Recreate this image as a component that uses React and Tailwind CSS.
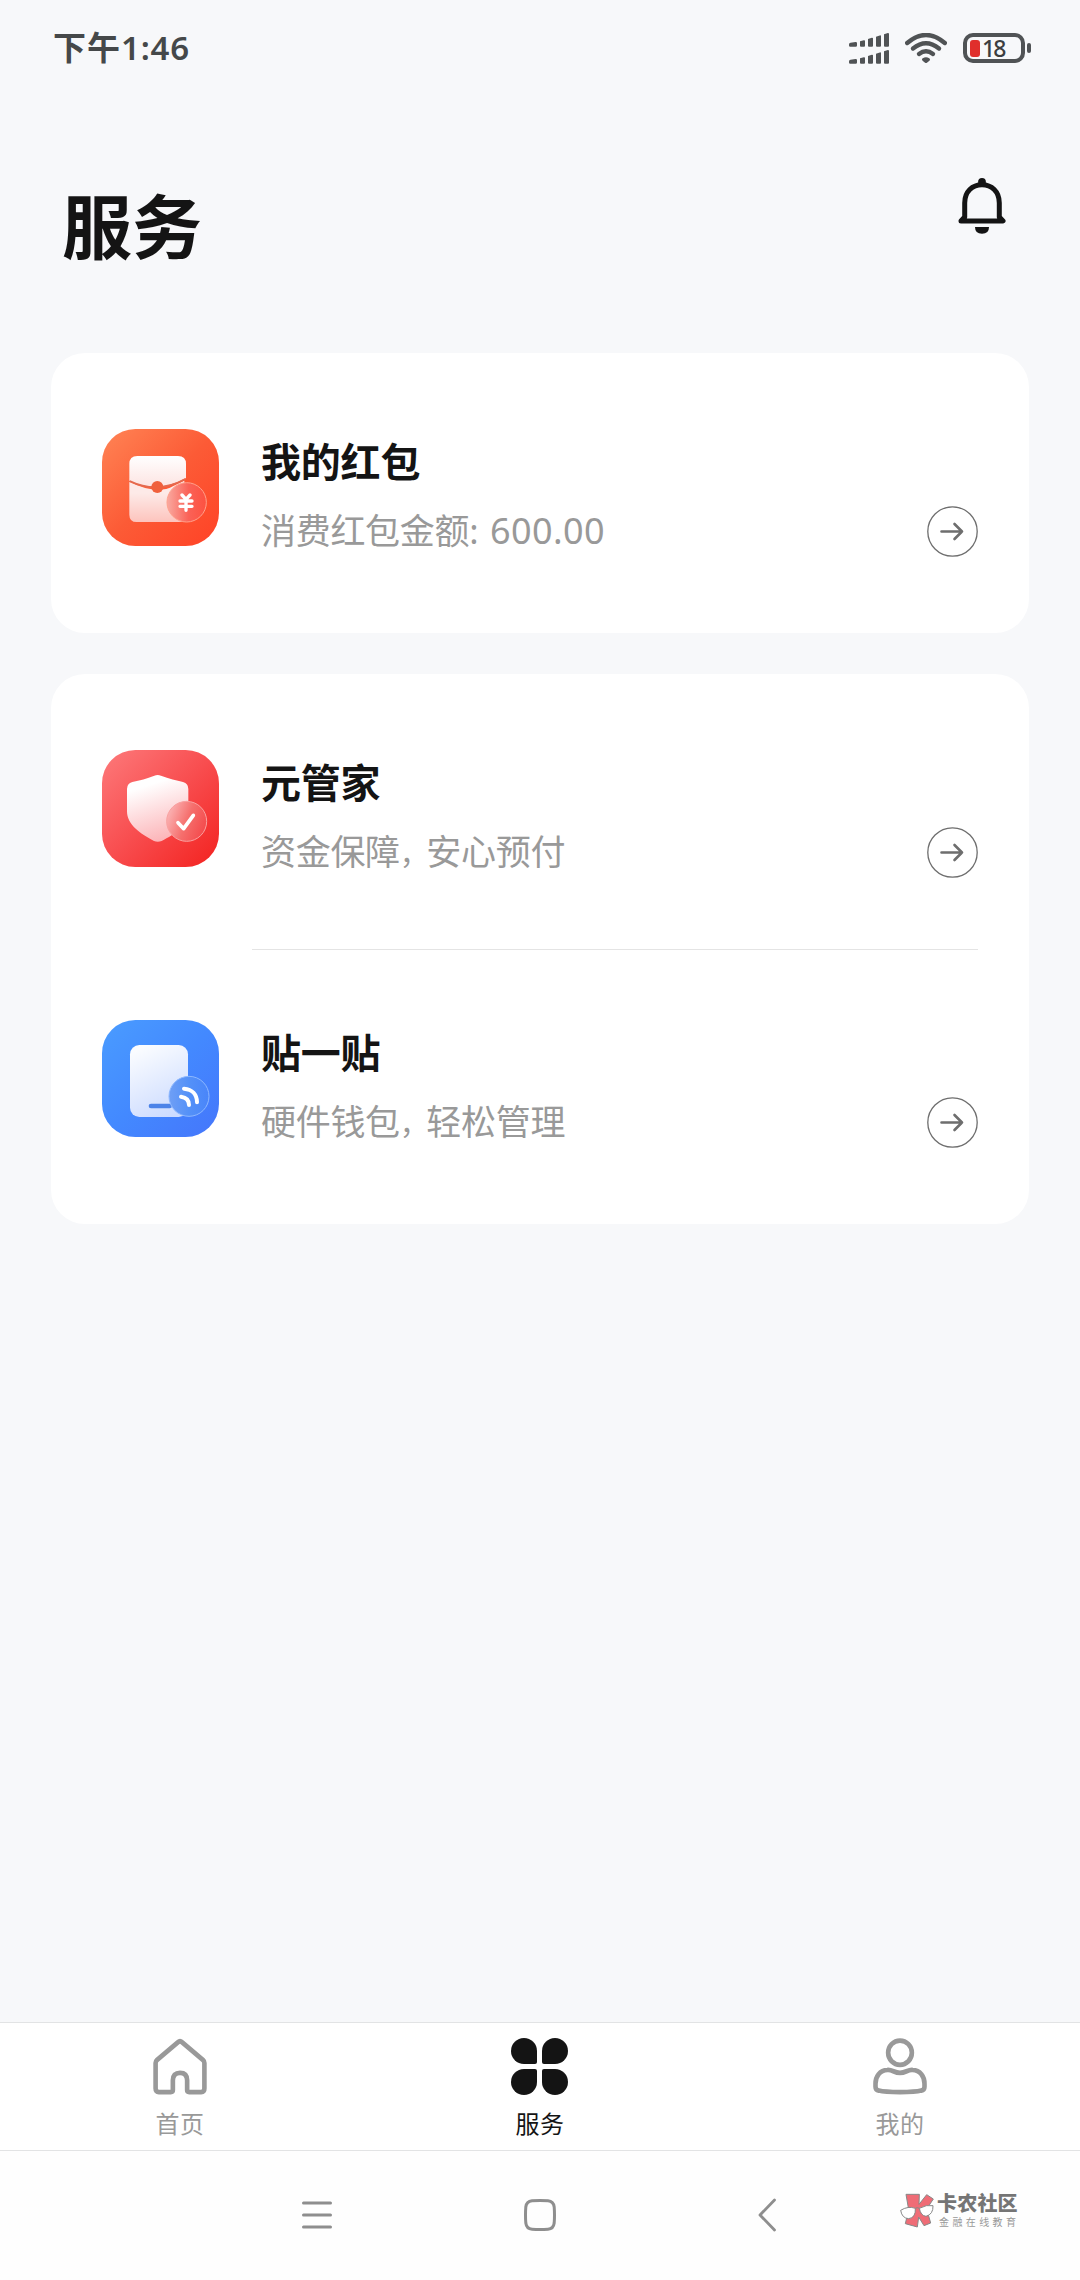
import React from "react";

const FONT = "font-['Noto_Sans','Noto_Sans_CJK_SC',sans-serif]";

function StatusBar() {
  return (
    <header className="flex h-[96px] items-center justify-between pl-[53px] pr-[49px] text-[#454849]">
      <div className="pb-[2px] text-[33px] font-semibold leading-[48px] tracking-[0.800px]">
        <span className="font-['Noto_Sans_CJK_SC'] font-bold tracking-[1px]">下午</span>1:46
      </div>
      <div className="flex items-center text-[#505355]">
        <svg width="40" height="31" viewBox="0 0 40 31" fill="currentColor">
          {[0, 17].map((dy) => (
            <g key={dy} transform={`translate(0 ${dy})`}>
              <path d="M0 11.5Q0 10 1.5 9.8L6.5 9Q8 8.8 8 10.3V12.5Q8 13.8 6.700 13.800H1.300Q0 13.800 0 12.500Z" />
              <path d="M11 8.300L14.800 7.200Q16 7 16 8V12.700Q16 13.800 15 13.800H12Q11 13.800 11 12.700Z" />
              <path d="M19 6L22.800 4.700Q24 4.500 24 5.500V12.700Q24 13.800 23 13.800H20Q19 13.800 19 12.700Z" />
              <path d="M27 3.700L30.800 2.400Q32 2.200 32 3.200V12.700Q32 13.800 31 13.800H28Q27 13.800 27 12.700Z" />
              <path d="M35 1.200L38.800 0.100Q40 0 40 1V12.700Q40 13.800 39 13.800H36Q35 13.800 35 12.700Z" />
            </g>
          ))}
        </svg>
        <svg className="ml-4" width="42" height="31" viewBox="0 0 42 31" fill="none" stroke="currentColor" strokeWidth="4.400" strokeLinecap="round">
          <path d="M2.200 10Q21 -6 39.800 10" />
          <path d="M8 15.500Q21 5 34 15.500" />
          <path d="M14 21Q21 15.500 28 21" />
          <path d="M18.500 26.500Q21 25 23.500 26.500L21 28.500Z" strokeWidth="3" strokeLinejoin="round" fill="currentColor" />
        </svg>
        <div className="ml-4 flex h-[30px] w-[62px] items-center rounded-[10px] border-4 border-[#505355] pl-[3px]">
          <div className="h-[17px] w-[10px] rounded-[3px] bg-[#e02f2c]" />
          <div className="ml-[2px] text-[23px] font-medium leading-[22px] tracking-[-2px] text-[#3c3e40]">18</div>
        </div>
        <div className="ml-[2px] h-[10px] w-1 rounded-[2px] bg-[#505355]" />
      </div>
    </header>
  );
}

function BellIcon() {
  return (
    <svg width="48" height="56" viewBox="0 0 48 56" fill="none" stroke="#141414" strokeWidth="5" strokeLinejoin="round" strokeLinecap="round">
      <circle cx="24" cy="4" r="3.900" fill="#141414" stroke="none" />
      <path d="M6.700 39V25C6.700 13.500 14.500 6.800 24 6.800S41.300 13.500 41.300 25V39L45 43H3Z" />
      <path d="M17 49H31Q31 55.800 24 55.800T17 49Z" fill="#141414" stroke="none" />
    </svg>
  );
}

function RedPacketIcon() {
  return (
    <svg width="117" height="117" viewBox="21 21 351 351" fill="none">
      <defs>
        <linearGradient id="pk-bg" x1="0" y1="0" x2="1" y2="1">
          <stop offset="0" stopColor="#ff8455" />
          <stop offset="0.500" stopColor="#fc5b36" />
          <stop offset="1" stopColor="#ff4226" />
        </linearGradient>
        <linearGradient id="pk-top" x1="0" y1="0" x2="0" y2="1">
          <stop offset="0" stopColor="#fff" />
          <stop offset="1" stopColor="#fde4e2" />
        </linearGradient>
        <linearGradient id="pk-body" x1="0" y1="0" x2="0" y2="1">
          <stop offset="0.300" stopColor="#fdeae8" />
          <stop offset="1" stopColor="#fdc4bd" />
        </linearGradient>
        <linearGradient id="pk-badge" x1="0" y1="0" x2="1" y2="0">
          <stop offset="0" stopColor="#f9a9a0" />
          <stop offset="0.550" stopColor="#fa6257" />
          <stop offset="1" stopColor="#fd5140" />
        </linearGradient>
      </defs>
      <rect x="21" y="21" width="351" height="351" rx="100" fill="url(#pk-bg)" />
      <path d="M103 180Q187 220 235 192L268 176V284Q268 300 252 300H125Q103 300 103 278Z" fill="url(#pk-body)" />
      <path d="M103 126Q103 102 127 102H249Q273 102 273 126V168Q187 216 103 176Z" fill="url(#pk-top)" />
      <path d="M104 177Q187 217 271 171" stroke="#e36a50" strokeWidth="5.500" />
      <circle cx="187" cy="195" r="18" fill="#f0603c" />
      <circle cx="275" cy="241" r="59" fill="url(#pk-badge)" stroke="#ffa08c" strokeWidth="3" />
      <path d="M261 219L273 232L285 219M273 232V265M255 237H291M255 253H291" stroke="#fff" strokeWidth="10" strokeLinecap="round" />
    </svg>
  );
}

function ShieldIcon() {
  return (
    <svg width="117" height="117" viewBox="21 21 351 351" fill="none">
      <defs>
        <linearGradient id="sh-bg" x1="0" y1="0" x2="1" y2="1">
          <stop offset="0" stopColor="#fd7a7b" />
          <stop offset="0.500" stopColor="#f84d4f" />
          <stop offset="1" stopColor="#f3221f" />
        </linearGradient>
        <linearGradient id="sh-body" x1="0.300" y1="0" x2="0.600" y2="1">
          <stop offset="0.150" stopColor="#fff" />
          <stop offset="1" stopColor="#fcb2b6" />
        </linearGradient>
        <linearGradient id="sh-badge" x1="0" y1="0.300" x2="1" y2="0.700">
          <stop offset="0" stopColor="#fbb5b6" />
          <stop offset="0.500" stopColor="#f56f6d" />
          <stop offset="1" stopColor="#f4484a" />
        </linearGradient>
      </defs>
      <rect x="21" y="21" width="351" height="351" rx="100" fill="url(#sh-bg)" />
      <path d="M178 98Q188 94 198 98C222 107 245 112 264 117Q280 121 280 138V205C280 245 240 275 200 294Q188 299 177 294C135 272 96 245 96 205V138Q96 121 112 117C135 112 155 107 178 98Z" fill="url(#sh-body)" />
      <circle cx="275" cy="235" r="60" fill="url(#sh-badge)" stroke="#f9a09f" strokeWidth="3" />
      <path d="M249 239L266 257L295 217" stroke="#fff" strokeWidth="11" strokeLinecap="round" strokeLinejoin="round" />
    </svg>
  );
}

function TapIcon() {
  return (
    <svg width="117" height="117" viewBox="21 21 351 351" fill="none">
      <defs>
        <linearGradient id="tp-bg" x1="0" y1="0" x2="1" y2="1">
          <stop offset="0" stopColor="#4a9cff" />
          <stop offset="0.500" stopColor="#4389ff" />
          <stop offset="1" stopColor="#4576fb" />
        </linearGradient>
        <linearGradient id="tp-body" x1="0.300" y1="0" x2="0.700" y2="1">
          <stop offset="0" stopColor="#fafcff" />
          <stop offset="1" stopColor="#ccdbff" />
        </linearGradient>
        <linearGradient id="tp-badge" x1="0" y1="0" x2="1" y2="0">
          <stop offset="0" stopColor="#6f9ff5" />
          <stop offset="0.500" stopColor="#5491f8" />
          <stop offset="1" stopColor="#4985fa" />
        </linearGradient>
      </defs>
      <rect x="21" y="21" width="351" height="351" rx="100" fill="url(#tp-bg)" />
      <rect x="105" y="96" width="174" height="216" rx="28" fill="url(#tp-body)" />
      <rect x="161" y="272" width="70" height="14" rx="7" fill="#4c83e8" />
      <circle cx="282" cy="250" r="60" fill="url(#tp-badge)" stroke="#8db8ff" strokeWidth="3" />
      <path d="M267 227C292 229 306 245 306 268M258 251C273 253 282 262 282 276" stroke="#fff" strokeWidth="12" strokeLinecap="round" />
    </svg>
  );
}

function ArrowCircle() {
  return (
    <svg width="51" height="51" viewBox="0 0 51 51" fill="none" stroke="#6e6e6e" strokeLinejoin="round" strokeLinecap="round">
      <circle cx="25.500" cy="25.500" r="24.700" strokeWidth="1.300" />
      <path d="M14.500 25.500H35M27.500 18L35 25.500L27.500 33" strokeWidth="2.600" />
    </svg>
  );
}

function ServiceRow({ icon, title, children }) {
  return (
    <div className="flex items-start">
      {icon}
      <div className="ml-[42px] grow">
        <h2 className="mt-2 text-[40px] font-bold leading-[50px] tracking-[-0.200px] text-[#141414]">{title}</h2>
        <p className="mt-5 text-[35px] leading-[48px] tracking-[-0.300px] text-[#999]">{children}</p>
      </div>
      <div className="mt-[77px]">
        <ArrowCircle />
      </div>
    </div>
  );
}

function Comma() {
  return <span className="text-[29px] tracking-[-2.500px]">，</span>;
}

function HomeIcon() {
  return (
    <svg className="mr-px" width="54" height="57" viewBox="0 0 56 58" preserveAspectRatio="none" fill="none" stroke="#999" strokeWidth="4.800" strokeLinejoin="round">
      <path d="M26 4.200Q28 2.400 30 4.200L52 22.500Q53.300 23.600 53.300 25.500V51.500Q53.300 55 50 55H37.500Q35.400 55 35.400 53V43Q35.400 35.400 28 35.400T20.600 43V53Q20.600 55 18.500 55H6Q2.700 55 2.700 51.500V25.500Q2.700 23.600 4 22.500Z" />
    </svg>
  );
}

function CloverIcon() {
  return (
    <div className="mr-px grid h-[57px] w-[57px] grid-cols-2 gap-[5px]">
      <div className="rounded-[50%] rounded-br-[2px] bg-[#141414]" />
      <div className="rounded-[50%] rounded-bl-[2px] bg-[#141414]" />
      <div className="rounded-[50%] rounded-tr-[2px] bg-[#141414]" />
      <div className="rounded-[50%] rounded-tl-[2px] bg-[#141414]" />
    </div>
  );
}

function UserIcon() {
  return (
    <svg className="mr-px" width="54" height="57" viewBox="0 0 56 58" preserveAspectRatio="none" fill="none" stroke="#999" strokeWidth="4.800" strokeLinejoin="round">
      <circle cx="28" cy="15" r="12.300" />
      <path d="M15 32.500C20 32 22 35.500 28 35.500S36 32 41 32.500C49 33 53.400 39 53.400 46.500V49.500Q53.400 53 50 53.500C42 55.600 14 55.600 6 53.500Q2.600 53 2.600 49.500V46.500C2.600 39 7 33 15 32.500Z" />
    </svg>
  );
}

function Tab({ icon, label, active }) {
  return (
    <div className="flex flex-1 flex-col items-center pt-[15px]">
      <div className="flex h-[58px] items-start">{icon}</div>
      <div className={`mt-3 text-[24px] leading-[32px] tracking-[0.500px] ${active ? "text-[#141414]" : "text-[#999]"}`}>{label}</div>
    </div>
  );
}

function WatermarkLogo() {
  return (
    <svg width="34" height="36" viewBox="0 0 102 108" stroke="#888" strokeWidth="3" strokeLinejoin="round">
      <path d="M18 4L58 4L57 34L80 5L100 18L80 48L92 90L72 98L56 72L52 102L16 92L26 50Z" fill="#ef6c76" />
      <path d="M2 52Q24 38 46 46Q48 74 26 77Q6 76 2 52Z" fill="#fff" />
      <path d="M58 46Q80 34 99 38Q100 64 78 70Q62 68 58 46Z" fill="#fff" />
      <path d="M46 46Q52 42 58 46" fill="none" />
    </svg>
  );
}

export default function App() {
  return (
    <div className={`flex h-[2280px] w-[1080px] flex-col overflow-hidden bg-[#f7f8fa] ${FONT}`}>
      <StatusBar />

      <div className="flex h-[257px] items-start justify-between pl-[62px] pr-[74px]">
        <h1 className="mt-[81px] text-[70px] font-bold leading-[100px] text-[#141414]">服务</h1>
        <div className="mt-[82px]">
          <BellIcon />
        </div>
      </div>

      <main className="flex grow flex-col gap-[41px] px-[51px]">
        <section className="h-[280px] rounded-[34px] bg-white px-[51px] pt-[76px]">
          <ServiceRow icon={<RedPacketIcon />} title="我的红包">
            消费红包金额:<span className="ml-[2px] text-[36px] tracking-[0.400px]"> 600.00</span>
          </ServiceRow>
        </section>
        <section className="h-[550px] rounded-[34px] bg-white px-[51px] pt-[76px]">
          <div className="h-[199px]">
            <ServiceRow icon={<ShieldIcon />} title="元管家">
              资金保障<Comma />安心预付
            </ServiceRow>
          </div>
          <div className="ml-[150px] h-px bg-[#e4e4e4]" />
          <div className="pt-[70px]">
            <ServiceRow icon={<TapIcon />} title="贴一贴">
              硬件钱包<Comma />轻松管理
            </ServiceRow>
          </div>
        </section>
      </main>

      <nav className="flex h-[129px] border-y-[1.500px] border-[#e2e3e4] bg-white">
        <Tab icon={<HomeIcon />} label="首页" />
        <Tab icon={<CloverIcon />} label="服务" active />
        <Tab icon={<UserIcon />} label="我的" />
      </nav>

      <footer className="flex h-[129px] items-center bg-[#fefefe] pb-[2px] pl-[302px]">
        <svg width="30" height="28" viewBox="0 0 30 28" stroke="#8e8e8e" strokeWidth="3" strokeLinecap="round">
          <path d="M1.500 2H28.500M1.500 14H28.500M1.500 26H28.500" />
        </svg>
        <svg className="ml-[192px]" width="32" height="32" viewBox="0 0 32 32" fill="none" stroke="#8e8e8e" strokeWidth="3">
          <path d="M8 1.800Q16 1.200 24 1.800Q29.500 2.300 30.200 8Q30.800 16 30.200 24Q29.500 29.700 24 30.200Q16 30.800 8 30.200Q2.500 29.700 1.800 24Q1.200 16 1.800 8Q2.500 2.300 8 1.800Z" />
        </svg>
        <svg className="ml-[202px]" width="18" height="34" viewBox="0 0 18 34" fill="none" stroke="#8e8e8e" strokeWidth="2.800" strokeLinecap="round" strokeLinejoin="round">
          <path d="M16.500 2L2 17L16.500 32" />
        </svg>
        <div className="mb-2 ml-[124px] flex items-center">
          <WatermarkLogo />
          <div className="ml-[3px] whitespace-nowrap">
            <div className="text-[20px] font-black leading-[20px] tracking-[0.200px] text-[#757575]">卡农社区</div>
            <div className="ml-[2px] mt-[2px] text-[10px] leading-[12px] tracking-[3.400px] text-[#999]">金融在线教育</div>
          </div>
        </div>
      </footer>
    </div>
  );
}
